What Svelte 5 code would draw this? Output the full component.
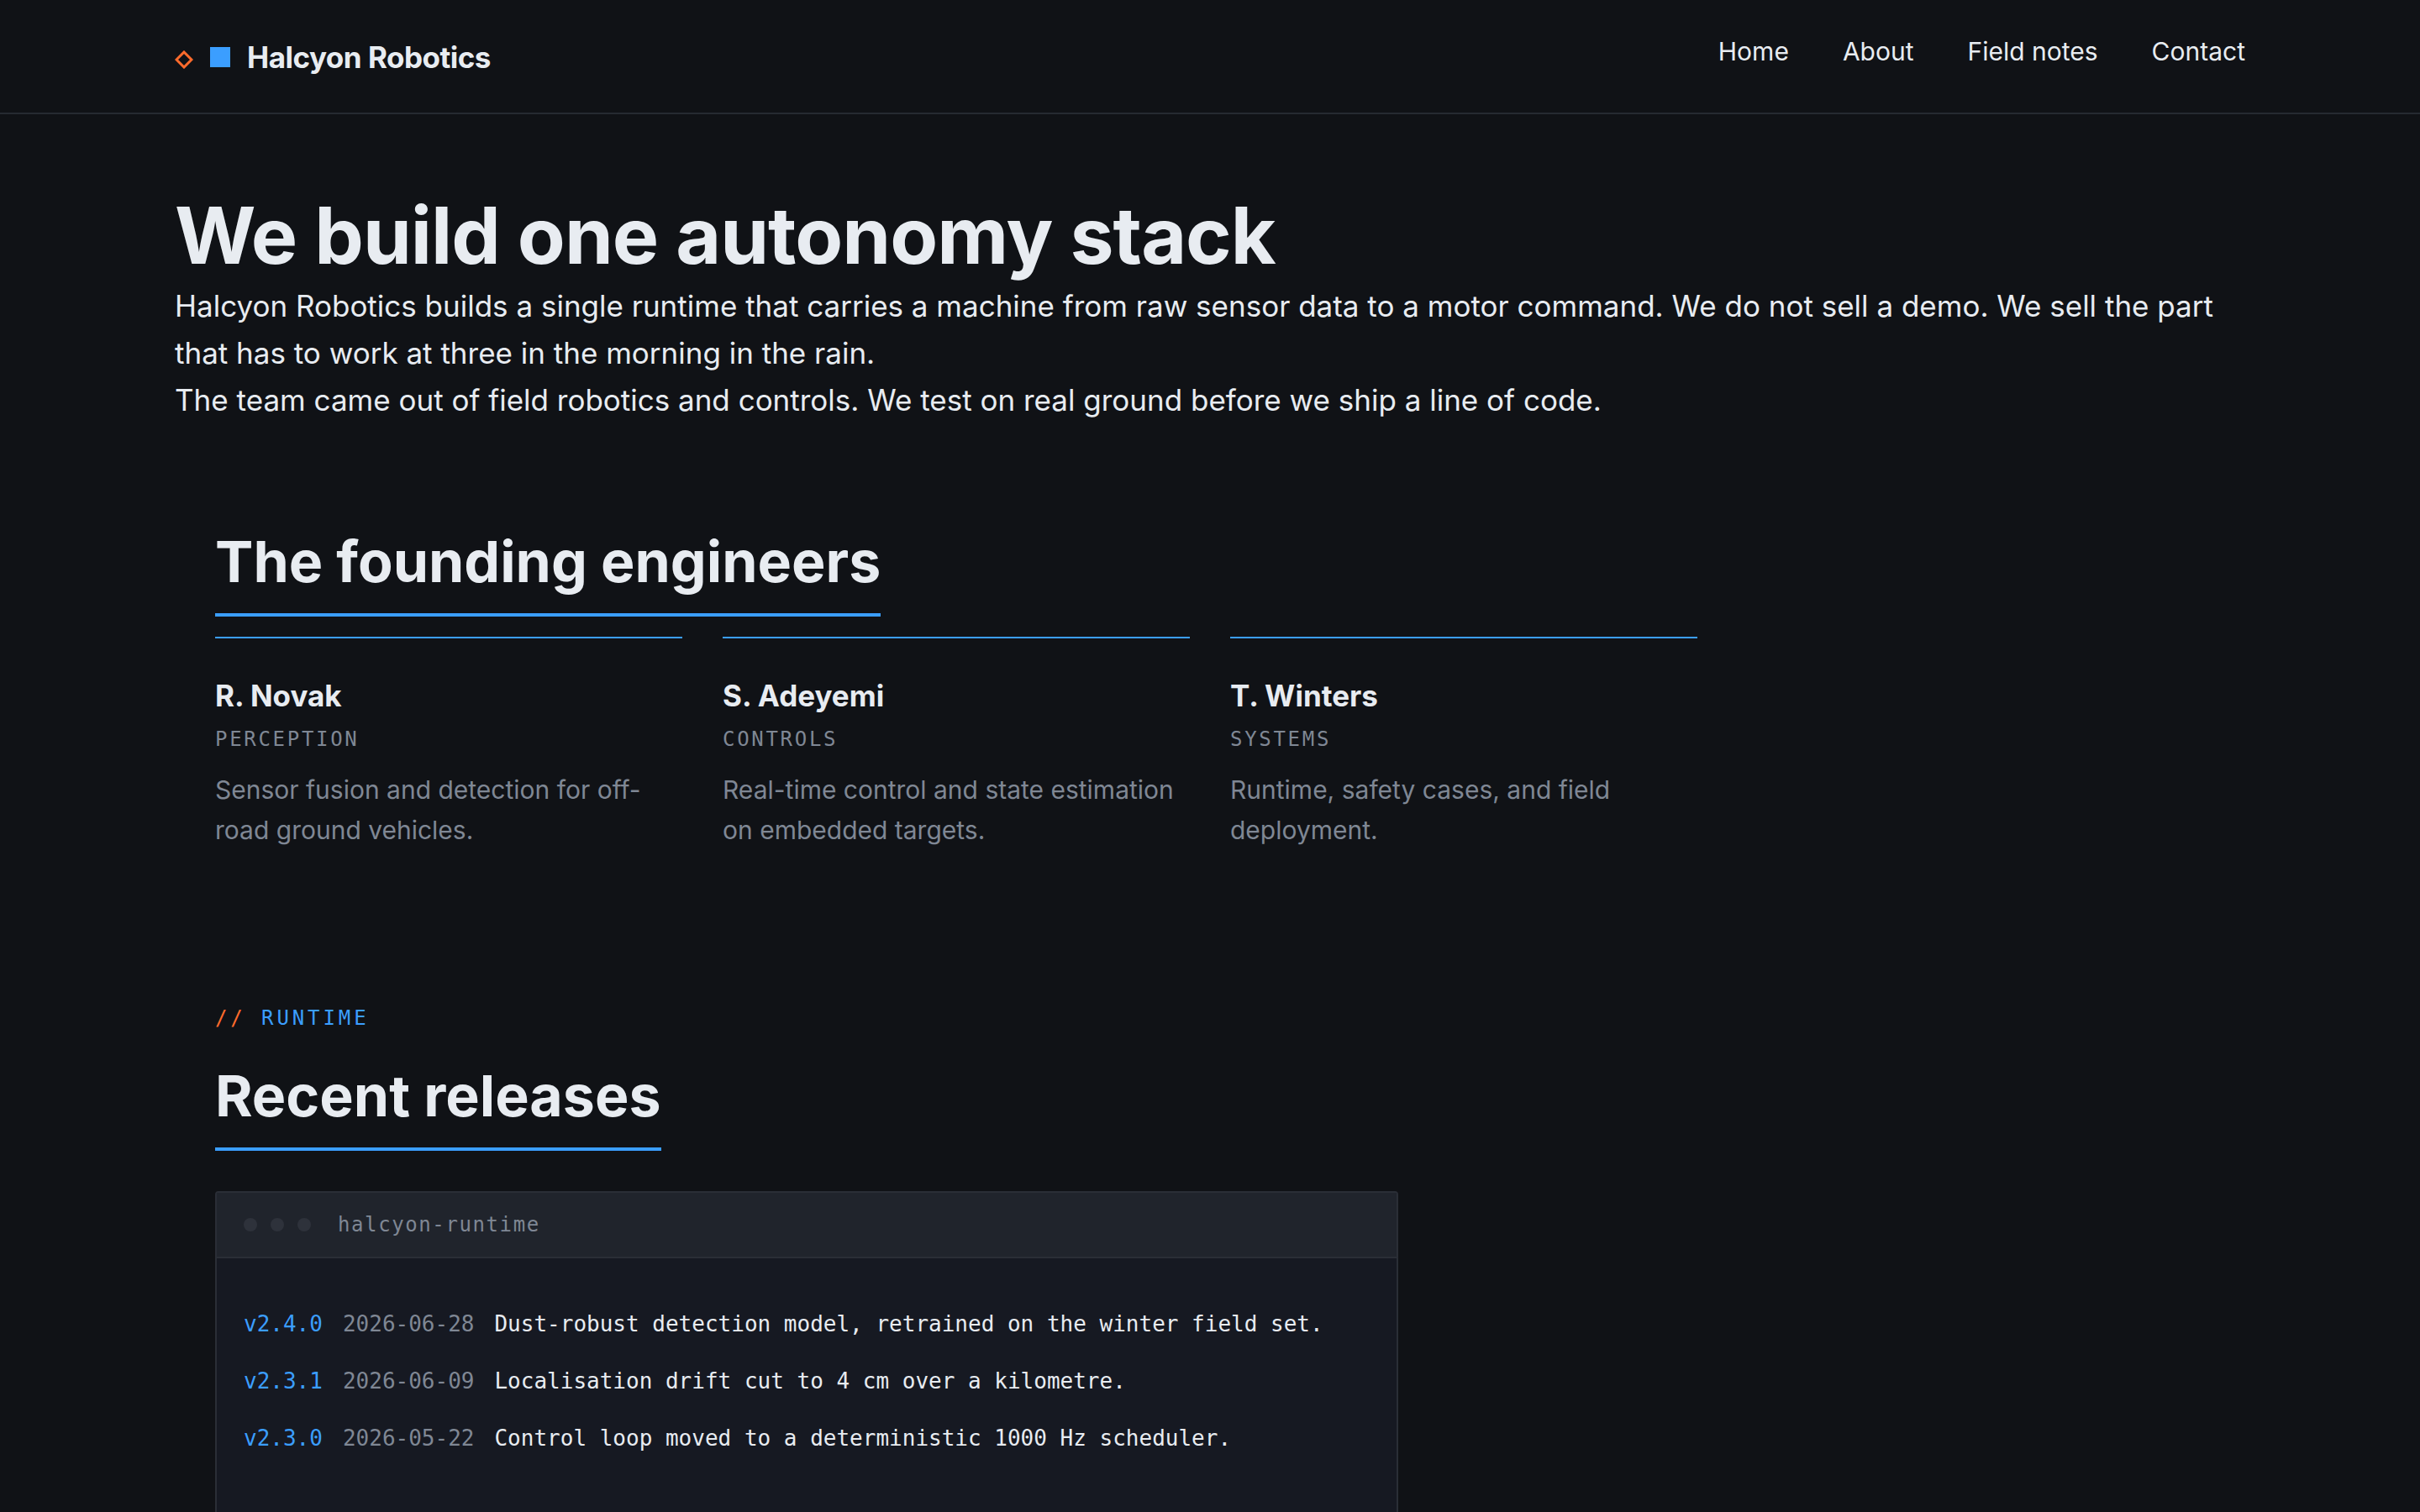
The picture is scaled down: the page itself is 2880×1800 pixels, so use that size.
<script>
	let engineers = [
		{ name: 'R. Novak', role: 'PERCEPTION', text: 'Sensor fusion and detection for off-road ground vehicles.' },
		{ name: 'S. Adeyemi', role: 'CONTROLS', text: 'Real-time control and state estimation on embedded targets.' },
		{ name: 'T. Winters', role: 'SYSTEMS', text: 'Runtime, safety cases, and field deployment.' }
	];

	let releases = [
		{ v: 'v2.4.0', date: '2026-06-28', text: 'Dust-robust detection model, retrained on the winter field set.' },
		{ v: 'v2.3.1', date: '2026-06-09', text: 'Localisation drift cut to 4 cm over a kilometre.' },
		{ v: 'v2.3.0', date: '2026-05-22', text: 'Control loop moved to a deterministic 1000 Hz scheduler.' }
	];

	let links = ['Home', 'About', 'Field notes', 'Contact'];
</script>

<header class="topbar">
	<div class="brand">
		<svg class="diamond" width="22" height="22" viewBox="0 0 22 22"><path d="M11 2 L20 11 L11 20 L2 11 Z" fill="none" stroke="#ff6b2c" stroke-width="3"/></svg>
		<span class="square"></span>
		<span class="brand_name">Halcyon Robotics</span>
	</div>
	<nav class="nav">
		{#each links as link}
			<span>{link}</span>
		{/each}
	</nav>
</header>

<main class="page">
	<section class="hero">
		<h1>We build one autonomy stack</h1>
		<p>Halcyon Robotics builds a single runtime that carries a machine from raw sensor data to a motor command. We do not sell a demo. We sell the part that has to work at three in the morning in the rain.</p>
		<p>The team came out of field robotics and controls. We test on real ground before we ship a line of code.</p>
	</section>

	<section class="team">
		<h2>The founding engineers</h2>
		<div class="cards">
			{#each engineers as e}
				<article class="card">
					<h3>{e.name}</h3>
					<div class="role">{e.role}</div>
					<p>{e.text}</p>
				</article>
			{/each}
		</div>
	</section>

	<section class="runtime">
		<div class="eyebrow"><span class="slashes">//</span> RUNTIME</div>
		<h2>Recent releases</h2>
		<div class="term">
			<div class="term_bar">
				<span class="dots"><i></i><i></i><i></i></span>
				<span class="term_title">halcyon-runtime</span>
			</div>
			<div class="term_body">
				{#each releases as r}
					<div class="row">
						<span class="ver">{r.v}</span>
						<span class="date">{r.date}</span>
						<span class="msg">{r.text}</span>
					</div>
				{/each}
			</div>
		</div>
	</section>
</main>

<style>
	:global(html), :global(body) {
		background: #101216;
		height: 100%;
		overflow: hidden;
	}

	:global(body) {
		font-family: Inter, "Liberation Sans", sans-serif;
		color: #e8ecf1;
	}

	.topbar {
		display: flex;
		justify-content: space-between;
		align-items: flex-start;
		height: 134px;
		padding: 0 208px;
		border-bottom: 2px solid #262a31;
	}

	.brand {
		display: flex;
		align-items: center;
		gap: 20px;
		height: 136px;
	}

	.diamond {
		margin-top: 6px;
	}

	.square {
		width: 24px;
		height: 24px;
		background: #3b9eff;
	}

	.brand_name {
		font-size: 35px;
		font-weight: 700;
		letter-spacing: -0.5px;
		color: #e8ecf1;
	}

	.nav {
		display: flex;
		gap: 64px;
		font-size: 30px;
		line-height: 48px;
		padding-top: 37px;
	}

	.page {
		padding: 0 208px;
	}

	.hero {
		padding-top: 88px;
	}

	h1 {
		margin: 0;
		font-size: 93px;
		font-weight: 700;
		line-height: 112px;
		letter-spacing: -1px;
		color: #e8ecf1;
	}

	.hero p {
		margin: 0;
		font-size: 35px;
		line-height: 56px;
		color: #e8ecf1;
	}

	.team {
		padding: 0 48px;
		margin-top: 120px;
	}

	h2 {
		display: inline-block;
		margin: 0;
		font-size: 68px;
		font-weight: 700;
		line-height: 88px;
		padding-bottom: 18px;
		border-bottom: 4px solid #3b9eff;
		color: #e8ecf1;
	}

	.cards {
		display: grid;
		grid-template-columns: repeat(3, 556px);
		gap: 48px;
		margin-top: 24px;
	}

	.card {
		border-top: 2px solid #3b9eff;
		padding-top: 44px;
	}

	h3 {
		margin: 0;
		font-size: 35px;
		font-weight: 700;
		line-height: 48px;
	}

	.role {
		margin-top: 8px;
		font-family: "DejaVu Sans Mono", monospace;
		font-size: 24px;
		letter-spacing: 2.7px;
		line-height: 40px;
		color: #7f8794;
	}

	.card p {
		margin: 16px 0 0;
		font-size: 30px;
		line-height: 48px;
		color: #7f8794;
	}

	.runtime {
		padding: 0 48px;
		margin-top: 184px;
	}

	.eyebrow {
		font-family: "DejaVu Sans Mono", monospace;
		font-size: 24px;
		line-height: 32px;
		letter-spacing: 3.9px;
		color: #3b9eff;
	}

	.slashes {
		color: #ff6b2c;
	}

	.runtime h2 {
		margin-top: 32px;
		display: table;
	}

	.term {
		width: 1408px;
		margin-top: 48px;
		border: 2px solid #2a2e36;
		border-radius: 4px;
		box-sizing: border-box;
		background: #161922;
	}

	.term_bar {
		display: flex;
		align-items: center;
		gap: 32px;
		height: 76px;
		padding: 0 32px;
		background: #20242c;
		border-bottom: 2px solid #2a2e36;
	}

	.dots {
		display: flex;
		gap: 16px;
	}

	.dots i {
		width: 16px;
		height: 16px;
		border-radius: 50%;
		background: #2e323b;
	}

	.term_title {
		font-family: "DejaVu Sans Mono", monospace;
		font-size: 24px;
		letter-spacing: 1.6px;
		color: #7f8794;
	}

	.term_body {
		padding: 56px 32px 200px;
		font-family: "DejaVu Sans Mono", monospace;
		font-size: 26px;
		line-height: 44px;
	}

	.row {
		display: flex;
		gap: 24px;
		margin-bottom: 24px;
	}

	.ver {
		color: #3b9eff;
	}

	.date {
		color: #7f8794;
	}

	.msg {
		color: #e8ecf1;
	}
</style>
